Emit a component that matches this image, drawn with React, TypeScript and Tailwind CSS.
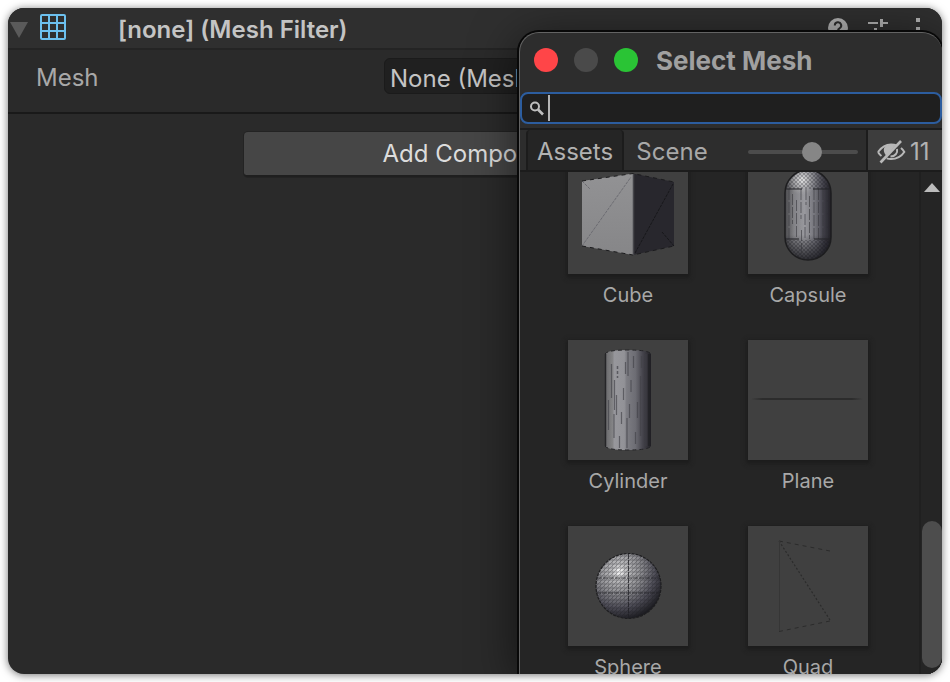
import type { ReactNode } from "react";

function CubeArt() {
  return (
    <svg viewBox="0 0 120 120" className="block size-full" aria-hidden="true">
      <defs>
        <linearGradient id="cubeFront" x1="0" y1="0" x2="0" y2="1">
          <stop offset="0" stopColor="#929294" />
          <stop offset="1" stopColor="#868688" />
        </linearGradient>
      </defs>
      <path d="M14 27 65 19.500 65 101 14 92Z" fill="url(#cubeFront)" />
      <path d="M65 19.500 106 28 106 92 65 101Z" fill="#28272d" />
      <path d="M14 92 63 23M14 27l8 8" stroke="#6c6c72" strokeWidth="1" strokeDasharray="3 1" fill="none" />
      <path d="M67 99 105 30M94 78l12 14" stroke="#17171a" strokeWidth="1" strokeDasharray="3 1" fill="none" />
      <path d="M14 27 65 19.500 106 28M14 92l51 9 41-9" stroke="#1c1c1e" strokeWidth="1" strokeDasharray="4 4" fill="none" />
      <path d="M65.500 20v81" stroke="#45454a" strokeWidth="1.500" />
    </svg>
  );
}

function CapsuleArt() {
  return (
    <svg viewBox="0 0 120 120" className="block size-full" aria-hidden="true">
      <defs>
        <linearGradient id="capsuleBody" x1="0" x2="1">
          <stop offset="0" stopColor="#4a4a4d" />
          <stop offset=".2" stopColor="#838387" />
          <stop offset=".42" stopColor="#99999e" />
          <stop offset=".65" stopColor="#74747b" />
          <stop offset=".85" stopColor="#3e3d46" />
          <stop offset="1" stopColor="#222126" />
        </linearGradient>
        <radialGradient id="capsuleShine" gradientUnits="userSpaceOnUse" cx="54" cy="26" r="15">
          <stop offset="0" stopColor="#f0f0f0" stopOpacity=".9" />
          <stop offset="1" stopColor="#aaaaaa" stopOpacity="0" />
        </radialGradient>
        <linearGradient id="capsuleShade" x1="0" y1="0" x2="0" y2="1">
          <stop offset=".72" stopColor="#111116" stopOpacity="0" />
          <stop offset="1" stopColor="#111116" stopOpacity=".8" />
        </linearGradient>
        <pattern id="capsuleMesh" width="4" height="4" patternUnits="userSpaceOnUse">
          <path d="M0 0l4 4M4 0 0 4" stroke="#1d1d22" strokeWidth=".7" opacity=".4" />
        </pattern>
        <clipPath id="capsuleClip">
          <rect x="37" y="16" width="46" height="90" rx="23" />
        </clipPath>
      </defs>
      <g clipPath="url(#capsuleClip)">
        <rect x="37" y="16" width="46" height="90" fill="url(#capsuleBody)" />
        <rect x="37" y="16" width="46" height="90" fill="url(#capsuleShine)" />
        <rect x="37" y="16" width="46" height="19" fill="url(#capsuleMesh)" />
        <rect x="37" y="86" width="46" height="20" fill="url(#capsuleMesh)" />
        <rect x="37" y="16" width="46" height="90" fill="url(#capsuleShade)" />
        <path d="M41 35v50M44.500 40v30M48.500 46v39M53 35v30M53.500 76v26M58 35v16M57 60v26M61.500 42v43M66 35v50M70.500 35v50M75 35v50M79 35v50" stroke="#37373d" strokeWidth="1" strokeDasharray="11 2" opacity=".6" />
        <path d="M37 35h17M65 35h18M37 85h14M66 85h17" stroke="#222226" strokeWidth="1" />
      </g>
      <rect x="37" y="16" width="46" height="90" rx="23" fill="none" stroke="#1d1d1f" strokeWidth="1.500" />
    </svg>
  );
}

function CylinderArt() {
  return (
    <svg viewBox="0 0 120 120" className="block size-full" aria-hidden="true">
      <defs>
        <linearGradient id="cylinderBody" x1="0" x2="1">
          <stop offset="0" stopColor="#68686a" />
          <stop offset=".17" stopColor="#858587" />
          <stop offset=".2" stopColor="#97979c" />
          <stop offset=".42" stopColor="#929297" />
          <stop offset=".47" stopColor="#7d7d83" />
          <stop offset=".66" stopColor="#6d6d74" />
          <stop offset=".82" stopColor="#45444c" />
          <stop offset="1" stopColor="#222126" />
        </linearGradient>
      </defs>
      <path d="M37 14q2-4 23-4t23 4v92q-2 4-23 4t-23-4Z" fill="url(#cylinderBody)" />
      <path
        d="M40.500 60v30M43.500 24v34M46 74v24M46.500 40v30M48.500 55v20M55.500 48v12M53.500 72v12M51.500 96v12M57.500 22v12M60 12v24M65.500 16v12M63 40v12M61.500 64v14M59 78v30M69.500 62v16M67.500 92v12M73.500 16v12M72.500 36v60M78 14v92"
        stroke="#424248"
        strokeWidth="1.200"
        opacity=".65"
      />
      <path d="M49.500 26v12" stroke="#424248" strokeWidth="1.500" strokeDasharray="3 2" opacity=".7" />
      <path d="M81.500 14v92" stroke="#202024" strokeWidth="3" opacity=".7" />
      <path d="M37.500 14v92" stroke="#262628" strokeWidth="1.500" />
      <path d="M37 14q2-4 23-4t23 4M37 106q2 4 23 4t23-4" fill="none" stroke="#242427" strokeWidth="1" strokeDasharray="4 3" />
    </svg>
  );
}

function PlaneArt() {
  return (
    <svg viewBox="0 0 120 120" className="block size-full" aria-hidden="true">
      <defs>
        <linearGradient id="planeLine" x1="0" x2="1">
          <stop offset="0" stopColor="#2c2c2c" stopOpacity="0" />
          <stop offset=".1" stopColor="#2c2c2c" />
          <stop offset=".9" stopColor="#2c2c2c" />
          <stop offset="1" stopColor="#2c2c2c" stopOpacity="0" />
        </linearGradient>
      </defs>
      <rect x="3" y="58" width="112" height="2" fill="url(#planeLine)" />
    </svg>
  );
}

function SphereArt() {
  return (
    <svg viewBox="0 0 120 120" className="block size-full" aria-hidden="true">
      <defs>
        <radialGradient id="sphereBody" cx=".36" cy=".28" r=".74">
          <stop offset="0" stopColor="#ffffff" />
          <stop offset=".14" stopColor="#c0c0c2" />
          <stop offset=".45" stopColor="#8d8d91" />
          <stop offset=".75" stopColor="#4d4c56" />
          <stop offset="1" stopColor="#1d1d22" />
        </radialGradient>
        <pattern id="sphereMesh" width="4" height="4" patternUnits="userSpaceOnUse">
          <path d="M0 4 4 0M0 0v4M0 2h4" stroke="#1c1c20" strokeWidth=".8" opacity=".4" />
        </pattern>
      </defs>
      <circle cx="60.500" cy="60" r="32.500" fill="url(#sphereBody)" />
      <circle cx="60.500" cy="60" r="32.500" fill="url(#sphereMesh)" />
      <path d="M29 52h63M28 67h64M60.500 28v64" stroke="#202025" strokeWidth="1" strokeDasharray="5 1" opacity=".75" />
      <circle cx="60.500" cy="60" r="32.500" fill="none" stroke="#1e1e20" strokeWidth="1.200" strokeDasharray="3 1" />
    </svg>
  );
}

function QuadArt() {
  return (
    <svg viewBox="0 0 120 120" className="block size-full" aria-hidden="true" fill="none" stroke="#2b2b2b">
      <path d="M31 15 82 94" strokeDasharray="2 2" strokeWidth="1.200" />
      <path d="M31 15 82 25M31 105.500 82 95" strokeDasharray="4 4" />
      <path d="M31.500 15v90" stroke="#363636" />
    </svg>
  );
}

function MeshGridIcon() {
  return (
    <svg viewBox="0 0 26 26" className="size-[26px] shrink-0" fill="none" stroke="#6cc0ee" strokeWidth="2" aria-hidden="true">
      <rect x="1" y="1" width="24" height="24" rx="1" />
      <path d="M9 1v24M17 1v24M1 9h24M1 17h24" />
    </svg>
  );
}

function HelpIcon() {
  return (
    <svg viewBox="0 0 20 20" className="size-5" aria-hidden="true">
      <circle cx="10" cy="10" r="10" fill="#b0b0b0" />
      <path d="M6.800 7.500a3.200 3.200 0 1 1 4.700 2.800c-1 .6-1.500 1-1.500 2.200M10 14.500v2" fill="none" stroke="#2d2d2d" strokeWidth="2" />
    </svg>
  );
}

function PresetIcon() {
  return (
    <svg viewBox="0 0 20 20" className="size-5" stroke="#b0b0b0" strokeWidth="2" fill="none" aria-hidden="true">
      <path d="M0 5h10M13 5h7M0 13h5M9 13h11" />
      <path d="M13.500 1v8M7.500 10v7" strokeWidth="3" />
    </svg>
  );
}

function MoreIcon() {
  return (
    <svg viewBox="0 0 20 20" className="size-5" fill="#b0b0b0" aria-hidden="true">
      <path d="M8 0h4v4H8zM8 9h4v4H8zM8 17h4v3H8z" />
    </svg>
  );
}

function SearchIcon() {
  return (
    <svg viewBox="0 0 16 16" className="size-4 shrink-0" fill="none" stroke="#bdbdbd" aria-hidden="true">
      <circle cx="6" cy="6.500" r="4" strokeWidth="2" />
      <path d="m9 9.500 5 5" strokeWidth="2.600" />
    </svg>
  );
}

function HiddenEyeIcon() {
  return (
    <svg viewBox="0 0 30 24" className="h-6 w-[30px] shrink-0" fill="none" stroke="#b8b8b8" aria-hidden="true">
      <path d="M2 12C6 6.500 10 4.500 15 4.500c2 0 4 .3 5.500 1M25 8c1.500 1.300 2.500 2.500 3.300 4C25 17 20 19 15 19c-1.500 0-3-.2-4.300-.6M5.500 16C4 15 3 13.700 2 12" strokeWidth="2" />
      <path d="M9 6.500c2-1.500 7-2.500 10-1L10.500 16C7.500 13 7 9 9 6.500Z" fill="#b8b8b8" stroke="none" />
      <path d="M21 9c1 4-2 7.500-6.500 7.500" strokeWidth="2" />
      <path d="M4.500 22.500 25 1" strokeWidth="2.600" />
    </svg>
  );
}

const meshes: { name: string; art: ReactNode }[] = [
  { name: "Cube", art: <CubeArt /> },
  { name: "Capsule", art: <CapsuleArt /> },
  { name: "Cylinder", art: <CylinderArt /> },
  { name: "Plane", art: <PlaneArt /> },
  { name: "Sphere", art: <SphereArt /> },
  { name: "Quad", art: <QuadArt /> },
];

function Inspector() {
  return (
    <section aria-label="Inspector">
      <header className="flex h-[42px] items-center border-b-2 border-[#242424] bg-[#2f2f2f] pr-[14px]">
        <button type="button" aria-label="Collapse component" className="flex w-[22px] shrink-0 justify-center pt-1">
          <svg viewBox="0 0 18 16" className="h-4 w-[18px]" aria-hidden="true">
            <path d="M0 0h18L9 16Z" fill="#5a5a5a" />
          </svg>
        </button>
        <div className="ml-[10px] pb-[2px]">
          <MeshGridIcon />
        </div>
        <h1 className="ml-[52px] pt-1 text-2xl font-semibold text-[#c4c4c4]">[none] (Mesh Filter)</h1>
        <div className="ml-auto flex gap-5">
          <button type="button" aria-label="Help"><HelpIcon /></button>
          <button type="button" aria-label="Presets"><PresetIcon /></button>
          <button type="button" aria-label="More options"><MoreIcon /></button>
        </div>
      </header>
      <div className="flex items-center border-b-2 border-[#191919] pt-2 pr-3 pb-[18px] pl-7">
        <label htmlFor="mesh-field" className="w-[348px] shrink-0 pt-1 text-2xl text-[#a8a8a8]">Mesh</label>
        <button id="mesh-field" type="button" className="h-9 flex-1 rounded-md border border-[#1b1b1b] bg-[#202020] px-[5px] pt-1 text-left text-2xl leading-8 text-[#c4c4c4]">
          None (Mesh)
        </button>
      </div>
      <div className="flex justify-center pt-[18px]">
        <button type="button" className="h-[45px] w-[462px] rounded-sm border-b-2 border-[#1f1f1f] bg-[#464646] text-2xl text-[#dcdcdc] shadow-[0_0_0_1px_#232323]">
          Add Component
        </button>
      </div>
    </section>
  );
}

function SelectMeshWindow() {
  return (
    <div
      role="dialog"
      aria-labelledby="window-title"
      className="absolute top-6 right-0 bottom-0 flex w-[423px] flex-col overflow-hidden rounded-t-[20px] border-t border-l border-[#636363] bg-[#2d2d2d] shadow-[0_0_0_2px_#080808,0_8px_48px_rgba(0,0,0,0.6)]"
    >
      <div className="flex h-[54px] shrink-0 items-center gap-4 pl-[14px]">
        <button type="button" aria-label="Close" className="size-6 rounded-full bg-[#ff4548]" />
        <button type="button" aria-label="Minimize" disabled className="size-6 rounded-full bg-[#4a4a4a]" />
        <button type="button" aria-label="Zoom" className="size-6 rounded-full bg-[#2ac435]" />
        <h2 id="window-title" className="ml-[2px] text-[26px] font-bold text-[#a0a0a0]">Select Mesh</h2>
      </div>
      <div className="mt-[5px] flex h-8 shrink-0 items-center rounded-lg border-2 border-[#2c5d9f] bg-[#1f1f1f] pl-[7px]">
        <SearchIcon />
        <span className="ml-[3px] h-[26px] w-[2px] bg-[#b4b4b4]" aria-hidden="true" />
        <input type="text" aria-label="Search" className="h-full min-w-0 flex-1 bg-transparent pr-2 pl-1 text-xl text-[#c4c4c4] outline-none" />
      </div>
      <div className="mt-1 flex h-11 shrink-0 border-y-2 border-[#1c1c1c] text-2xl text-[#b2b2b2]">
        <div role="tablist" className="flex pl-[6px]">
          <button type="button" role="tab" aria-selected="true" className="w-[98px] rounded-t border-x-2 border-[#1c1c1c] bg-[#252525] pt-1">Assets</button>
          <button type="button" role="tab" aria-selected="false" className="w-24 pt-1 text-[#a8a8a8]">Scene</button>
        </div>
        <div className="ml-auto flex items-center pt-1 pr-2">
          <input
            type="range"
            aria-label="Preview size"
            min="0"
            max="100"
            defaultValue="60"
            className="h-1 w-[110px] appearance-none rounded-full bg-[#4c4c4c] [&::-webkit-slider-thumb]:size-5 [&::-webkit-slider-thumb]:appearance-none [&::-webkit-slider-thumb]:rounded-full [&::-webkit-slider-thumb]:bg-[#868686]"
          />
        </div>
        <button type="button" aria-label="11 hidden packages" className="flex w-[76px] items-center gap-1 border-l-2 border-[#1c1c1c] bg-[#3d3d3d] pt-1 pl-2">
          <HiddenEyeIcon />
          11
        </button>
      </div>
      <div className="flex min-h-0 flex-1 overflow-hidden bg-[#252525]">
        <ul className="-mt-[18px] grid flex-1 grid-cols-[120px_120px] content-start gap-x-[60px] gap-y-[30px] pl-12">
          {meshes.map(({ name, art }) => (
            <li key={name}>
              <button type="button" className="block w-full">
                <span className="block h-[120px] bg-[#404040] shadow-[0_2px_4px_2px_#1d1d1d]">{art}</span>
                <span className="mt-[7px] mb-px block text-xl leading-7 text-[#a8a8a8]">{name}</span>
              </button>
            </li>
          ))}
        </ul>
        <div className="flex w-[23px] shrink-0 flex-col items-end justify-between border-l-2 border-[#202020] bg-[#252525] pt-[11px] pb-[6px]">
          <button type="button" aria-label="Scroll up" className="mr-[2px]">
            <svg viewBox="0 0 16 9" className="h-[9px] w-4" aria-hidden="true">
              <path d="M8 0 16 9H0Z" fill="#bcbcbc" />
            </svg>
          </button>
          <div className="h-[147px] w-5 rounded-full bg-[#4d4d4d]" />
        </div>
      </div>
    </div>
  );
}

export default function App() {
  return (
    <div className="h-screen bg-white p-2 font-['Inter','Liberation_Sans',sans-serif]">
      <main className="relative h-full overflow-hidden rounded-2xl bg-[#2a2a2a] shadow-[0_1px_8px_rgba(0,0,0,0.55)]">
        <Inspector />
        <SelectMeshWindow />
      </main>
    </div>
  );
}
